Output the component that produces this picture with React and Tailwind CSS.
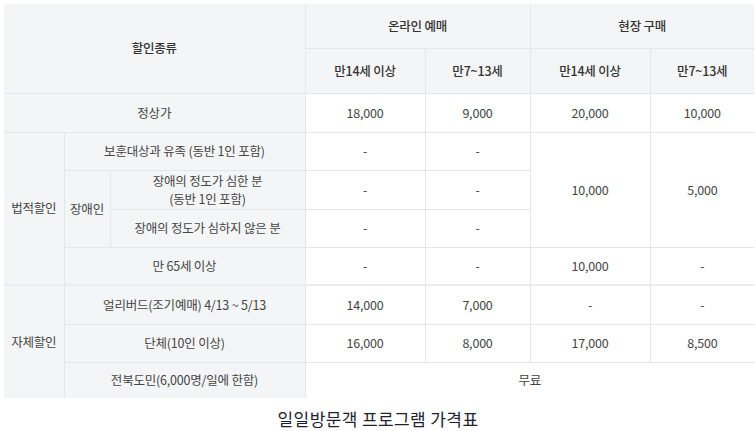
const th = 'border border-[#e6e6e6] bg-[#f4f5f7] font-medium text-[#333]';
const lab = 'border border-[#e6e6e6] bg-[#f4f5f7] text-[#444]';
const td = 'border border-[#e6e6e6] bg-white text-[#444]';

const App = () => {
  return (
    <div className="w-[756px] h-[431px] bg-white pt-[4px] px-[4px] font-['Noto_Sans_CJK_KR','Noto_Sans',sans-serif]">
      <table className="w-[750px] table-fixed border-collapse border-hidden text-center text-[12.5px] tracking-[-0.2px] leading-[18px]">
        <colgroup>
          <col className="w-[60px]" />
          <col className="w-[46px]" />
          <col className="w-[195px]" />
          <col className="w-[120px]" />
          <col className="w-[105px]" />
          <col className="w-[120px]" />
          <col className="w-[104px]" />
        </colgroup>
        <thead>
          <tr className="h-[44px]">
            <th colSpan={3} rowSpan={2} className={th}>할인종류</th>
            <th colSpan={2} className={th}>온라인 예매</th>
            <th colSpan={2} className={th}>현장 구매</th>
          </tr>
          <tr className="h-[45px]">
            <th className={th}>만14세 이상</th>
            <th className={th}>만7~13세</th>
            <th className={th}>만14세 이상</th>
            <th className={th}>만7~13세</th>
          </tr>
        </thead>
        <tbody>
          <tr className="h-[39px]">
            <td colSpan={3} className={lab}>정상가</td>
            <td className={td}>18,000</td>
            <td className={td}>9,000</td>
            <td className={td}>20,000</td>
            <td className={td}>10,000</td>
          </tr>
          <tr className="h-[38px]">
            <td rowSpan={4} className={lab}>법적할인</td>
            <td colSpan={2} className={lab}>보훈대상과 유족 (동반 1인 포함)</td>
            <td className={td}>-</td>
            <td className={td}>-</td>
            <td rowSpan={3} className={td}>10,000</td>
            <td rowSpan={3} className={td}>5,000</td>
          </tr>
          <tr className="h-[39px]">
            <td rowSpan={2} className={lab}>장애인</td>
            <td className={lab}>
              장애의 정도가 심한 분
              <br />
              (동반 1인 포함)
            </td>
            <td className={td}>-</td>
            <td className={td}>-</td>
          </tr>
          <tr className="h-[38px]">
            <td className={lab}>장애의 정도가 심하지 않은 분</td>
            <td className={td}>-</td>
            <td className={td}>-</td>
          </tr>
          <tr className="h-[38px]">
            <td colSpan={2} className={lab}>만 65세 이상</td>
            <td className={td}>-</td>
            <td className={td}>-</td>
            <td className={td}>10,000</td>
            <td className={td}>-</td>
          </tr>
          <tr className="h-[39px] border-t-2 border-[#ececec]">
            <td rowSpan={3} className={lab}>자체할인</td>
            <td colSpan={2} className={lab}>얼리버드(조기예매) 4/13 ~ 5/13</td>
            <td className={td}>14,000</td>
            <td className={td}>7,000</td>
            <td className={td}>-</td>
            <td className={td}>-</td>
          </tr>
          <tr className="h-[38px]">
            <td colSpan={2} className={lab}>단체(10인 이상)</td>
            <td className={td}>16,000</td>
            <td className={td}>8,000</td>
            <td className={td}>17,000</td>
            <td className={td}>8,500</td>
          </tr>
          <tr className="h-[36px]">
            <td colSpan={2} className={lab}>전북도민(6,000명/일에 한함)</td>
            <td colSpan={4} className={td}>무료</td>
          </tr>
        </tbody>
      </table>
      <p className="mt-[11px] text-center text-[17px] tracking-[0.4px] leading-[20px] text-[#1e2230]">일일방문객 프로그램 가격표</p>
    </div>
  );
};

export default App;
